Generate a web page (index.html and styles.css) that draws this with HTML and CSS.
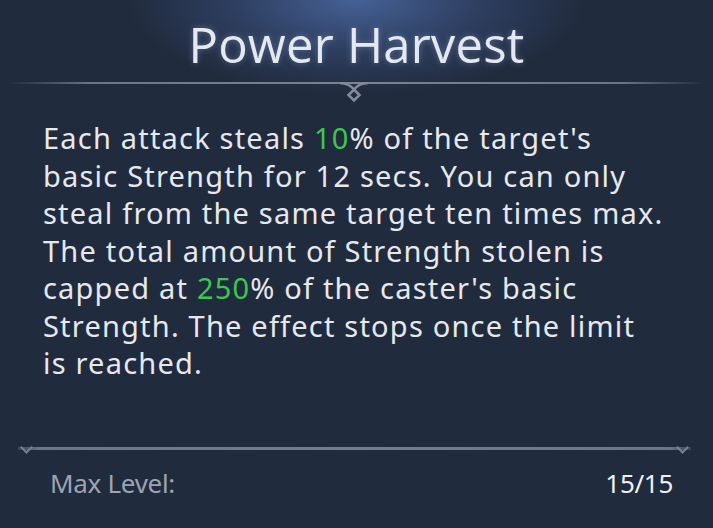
FILE: index.html
```html
<!DOCTYPE html>
<html>
<head>
<meta charset="utf-8">
<link rel="stylesheet" href="styles.css">
</head>
<body>
<div class="panel">
  <header class="head">
    <h1 class="title">Power Harvest</h1>
  </header>
  <div class="divider-top">
    <svg class="orn" width="30" height="22" viewBox="0 0 30 22">
      <path d="M1 1 Q10 1 15 7.5 Q20 1 29 1" fill="none" stroke="#838b9a" stroke-width="2.4"/>
      <path d="M15 7.5 L20.5 13 L15 18.5 L9.5 13 Z" fill="none" stroke="#838b9a" stroke-width="2.6"/>
    </svg>
  </div>
  <p class="desc">Each attack steals <span class="hl">10</span>% of the target's<br>basic Strength for 12 secs. You can only<br>steal from the same target ten times max.<br>The total amount of Strength stolen is<br>capped at <span class="hl">250</span>% of the caster's basic<br>Strength. The effect stops once the limit<br>is reached.</p>
  <div class="divider-bottom">
    <span class="tick tick-l"></span>
    <span class="tick tick-r"></span>
  </div>
  <footer class="foot">
    <span class="label">Max Level:</span>
    <span class="value">15/15</span>
  </footer>
</div>
</body>
</html>
```
FILE: styles.css
```css
html, body {
  margin: 0;
  padding: 0;
  width: 713px;
  height: 528px;
  overflow: hidden;
  background: #212b3e;
}
.panel {
  width: 713px;
  height: 528px;
  display: flex;
  flex-direction: column;
  background:
    radial-gradient(ellipse 230px 95px at 50% 0, rgba(72, 100, 155, 0.95), rgba(60, 85, 135, 0.45) 55%, rgba(33, 43, 62, 0) 100%),
    #212b3e;
  font-family: "Open Sans", "Noto Sans", sans-serif;
}
.head {
  height: 82px;
  display: flex;
  justify-content: center;
  align-items: center;
}
.title {
  margin: 0;
  padding-top: 6px;
  font-weight: 400;
  font-size: 49px;
  color: #e4e9f1;
  letter-spacing: 0.2px;
  text-shadow: 0 0 6px rgba(190, 210, 240, 0.35);
}
.divider-top {
  position: relative;
  height: 2px;
  margin: 0 8px;
  background: linear-gradient(90deg, rgba(120,128,142,0) 0%, #6e7686 12%, #7b8392 50%, #6e7686 88%, rgba(120,128,142,0) 100%);
}
.orn {
  position: absolute;
  left: 331px;
  top: 0;
}
.desc {
  margin: 35px 0 0 0;
  padding: 0 0 0 43px;
  font-family: "Noto Sans", sans-serif;
  font-size: 29px;
  line-height: 37.5px;
  color: #e6e8ec;
  letter-spacing: 1.2px;
  white-space: nowrap;
}
.hl {
  color: #3ec64f;
}
.divider-bottom {
  position: relative;
  height: 3px;
  margin: 65px 22px 0 18px;
  background: linear-gradient(90deg, rgba(150,160,175,0.2) 0%, #6c7586 3%, #747d8d 50%, #6c7586 97%, rgba(150,160,175,0.2) 100%);
}
.tick {
  position: absolute;
  width: 7px;
  height: 7px;
  border-right: 2px solid #7a8292;
  border-bottom: 2px solid #7a8292;
  transform: rotate(45deg);
}
.tick-l { left: 4px; top: -4px; }
.tick-r { right: 4px; top: -4px; }
.foot {
  display: flex;
  justify-content: space-between;
  align-items: center;
  padding: 15px 40px 0 50px;
  font-family: "Noto Sans", sans-serif;
  font-size: 26px;
  letter-spacing: -0.3px;
}
.label { color: #9ca4b2; }
.value { color: #eef0f3; }
```
